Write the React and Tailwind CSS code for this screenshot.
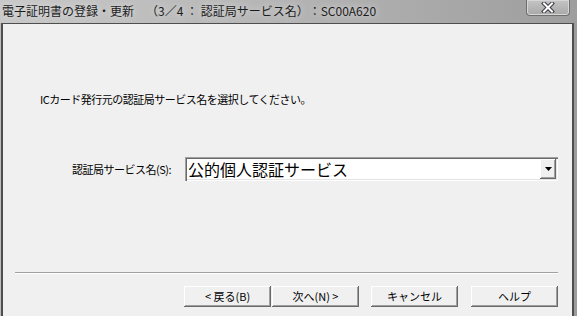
import React from "react";

const jp = { fontFamily: '"Noto Sans CJK JP", "Noto Sans", sans-serif' };

function Btn({ children, className = "" }) {
  return (
    <div
      className={
        "h-[21px] w-[87px] flex items-center justify-center bg-[#f0f0f0] text-[11px] text-black leading-none shadow-[inset_-1px_-1px_#696969,inset_1px_1px_#ffffff,inset_-2px_-2px_#a0a0a0] " +
        className
      }
    >
      {children}
    </div>
  );
}

export default function App() {
  return (
    <div
      className="w-[577px] h-[316px] overflow-hidden flex flex-col bg-gradient-to-r from-[#bdbdbd] to-[#9c9c9c] [text-spacing-trim:space-all]"
      style={jp}
    >
      {/* title bar */}
      <div className="h-[23px] shrink-0 flex items-start justify-between bg-gradient-to-r from-[#c8c8c8] via-[#b4b4b4] to-[#9e9e9e]">
        <div className="pl-[2px] pt-[2px] text-[12px] leading-[18px] text-[#1c1c1c] whitespace-pre [text-shadow:0_0_6px_#e8e8e8]">
          電子証明書の登録・更新　（3／4 ： 認証局サービス名）：SC00A620
        </div>
        <div className="mr-[7px] w-[44px] h-[16px] rounded-b-[4px] border border-t-0 border-[#6f6f6f] bg-gradient-to-b from-[#c4c4c4] to-[#a8a8a8] shadow-[inset_0_0_0_1px_#d6d6d6] flex items-center justify-center">
          <svg width="14" height="11" viewBox="0 0 14 11">
            <path d="M3 1.5 L11 9.5 M11 1.5 L3 9.5" stroke="#3a3a46" strokeWidth="4" strokeLinecap="square" />
            <path d="M3 1.5 L11 9.5 M11 1.5 L3 9.5" stroke="#ffffff" strokeWidth="2" strokeLinecap="square" />
          </svg>
        </div>
      </div>
      {/* content */}
      <div className="flex-1 ml-[1px] mr-[3px] border-l-2 border-t border-r-2 border-[#4e4e4e] bg-[#f0f0f0] flex flex-col">
        <div className="mt-[67px] ml-[37px] h-[16px] flex items-center text-[11px] tracking-[-0.5px] text-black">
          ICカード発行元の認証局サービス名を選択してください。
        </div>
        <div className="mt-[50px] flex items-center h-[24px]">
          <div className="w-[182px] pl-[69px] text-[11px] tracking-[-0.5px] text-black">
            認証局サービス名(S):
          </div>
          <div className="w-[373px] h-[24px] bg-white flex items-center justify-between shadow-[inset_1px_1px_#a0a0a0,inset_2px_2px_#696969,inset_-1px_-1px_#ffffff,inset_-2px_-2px_#e3e3e3]">
            <span className="pl-[3px] text-[16px] leading-none text-black">公的個人認証サービス</span>
            <div className="mr-[2px] w-[16px] h-[20px] bg-[#f0f0f0] flex items-center justify-center shadow-[inset_-1px_-1px_#696969,inset_1px_1px_#ffffff,inset_-2px_-2px_#a0a0a0]">
              <svg width="7" height="4" viewBox="0 0 7 4">
                <path d="M0 0 H7 L3.5 4 Z" fill="#000" />
              </svg>
            </div>
          </div>
        </div>
        <div className="mt-[91px] ml-[12px] w-[543px] h-[2px] border-t border-[#a0a0a0] border-b border-b-white" />
        <div className="mt-[12px] ml-[181px] flex">
          <Btn>&lt; 戻る(B)</Btn>
          <Btn className="ml-[1px]">次へ(N) &gt;</Btn>
          <Btn className="ml-[12px]">キャンセル</Btn>
          <Btn className="ml-[13px]">ヘルプ</Btn>
        </div>
      </div>
    </div>
  );
}
